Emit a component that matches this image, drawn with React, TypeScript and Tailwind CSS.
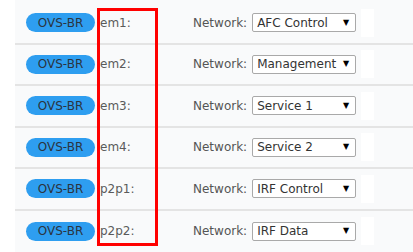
import React from "react";

const rows = [
  { name: "em1:", net: "AFC Control" },
  { name: "em2:", net: "Management" },
  { name: "em3:", net: "Service 1" },
  { name: "em4:", net: "Service 2" },
  { name: "p2p1:", net: "IRF Control" },
  { name: "p2p2:", net: "IRF Data" },
];

export default function App() {
  return (
    <div
      className="relative w-[413px] h-[252px] bg-white overflow-hidden"
      style={{ fontFamily: '"DejaVu Sans", Verdana, sans-serif' }}
    >
      <div className="ml-[15px] pt-[3px] bg-[#f9fafb] h-full">
        {rows.map((r, i) => (
          <div
            key={i}
            className={`flex items-center h-[41.5px] ${i < rows.length - 1 ? "border-b-2 border-[#e4e4e4]" : ""}`}
          >
            <div className="ml-[11px] w-[69px] h-[19px] rounded-full bg-[#2e9ef0] flex items-center justify-center text-[12px] text-[#2b3440]">
              OVS-BR
            </div>
            <div className="ml-[5px] w-[93px] text-[12px] text-[#5a5a5a]">{r.name}</div>
            <div className="text-[12px] text-[#555]">Network:</div>
            <div className="ml-[5px] w-[104px] h-[19px] border border-[#a9a9a9] rounded-[2px] bg-white flex items-center justify-between pl-[4px] pr-[6px] text-[12px] text-[#333]">
              <span>{r.net}</span>
              <span className="text-[8px] text-black">▼</span>
            </div>
            <div className="ml-[5px] w-[13px] h-[28px] bg-white" />
          </div>
        ))}
      </div>
      <div className="absolute left-[97px] top-[8px] w-[61px] h-[238px] border-[3px] border-[#ff0000]" />
    </div>
  );
}
